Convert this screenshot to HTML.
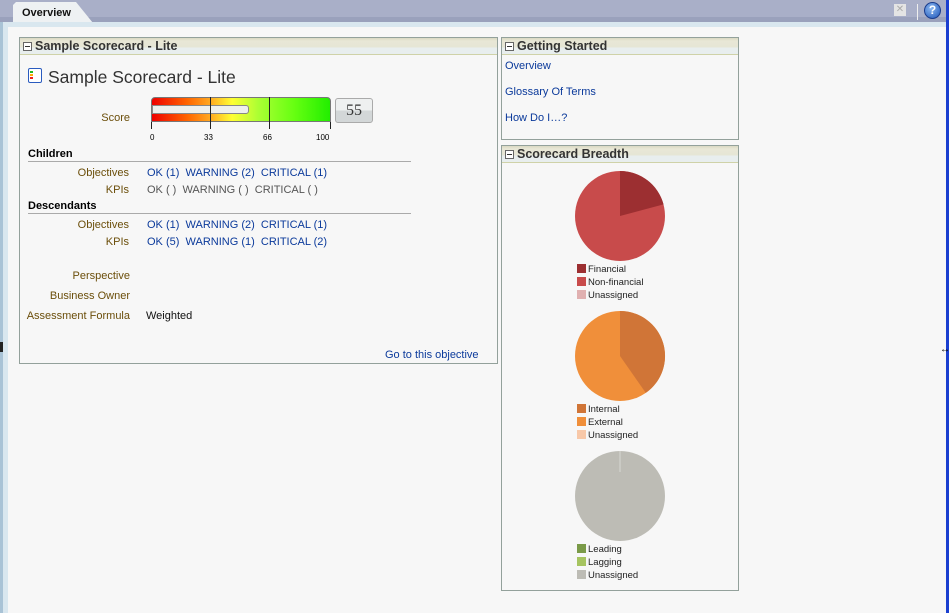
<!DOCTYPE html>
<html><head><meta charset="utf-8"><style>
*{margin:0;padding:0;box-sizing:border-box}
body{width:949px;height:613px;overflow:hidden;background:#f7f7f7;font-family:"Liberation Sans",sans-serif;font-size:11px;position:relative}
.a{position:absolute;white-space:nowrap;line-height:13px;margin-top:1px}
.lb{color:#6b4e0a;text-align:right;width:200px}
.bl{color:#0b3a9b}
.gr{color:#555}
.box{position:absolute;border:1px solid #93a19b;background:#f7f7f7}
.hd{position:absolute;left:0;right:0;top:0;height:17px;background:linear-gradient(#d9d8c3 0,#e8e7d6 3px,#e6e6d5 9px,#e8eeee 10px,#e8eeee 16px);border-bottom:1px solid #cfd2a8;font-weight:bold;font-size:12.5px;color:#333;line-height:16px;padding-left:15px}
.hd:before{content:"";position:absolute;left:3px;top:4px;width:7px;height:7px;border:1px solid #666;background:#fff}
.hd:after{content:"";position:absolute;left:5px;top:8px;width:5px;height:1px;background:#333}
.sq{position:absolute;width:9px;height:9px}
.lg{position:absolute;font-size:9.5px;color:#222;line-height:11px;margin-top:1px}
</style></head><body>
<div style="position:absolute;left:0;top:0;width:949px;height:22px;background:#a9afc8"></div>
<div style="position:absolute;left:0;top:17px;width:949px;height:5px;background:#9aa1bc"></div>
<div style="position:absolute;left:13px;top:2px;width:80px;height:21px;background:#eef1f3;clip-path:polygon(0 3px,3px 0,63px 0,80px 21px,0 21px)"></div>
<div class="a" style="left:22px;top:6px;font-weight:bold;font-size:11px;color:#111">Overview</div>
<div style="position:absolute;left:3px;top:22px;width:944px;height:591px;background:#d9e7ef"></div>
<div style="position:absolute;left:0;top:22px;width:3px;height:591px;background:#a9c3d6"></div>
<div style="position:absolute;left:8px;top:27px;width:939px;height:586px;background:#f7f7f7"></div>
<div style="position:absolute;left:946px;top:0;width:3px;height:613px;background:#1a3fd0"></div>
<div style="position:absolute;left:894px;top:4px;width:12px;height:12px;background:#e4e4e4;color:#aaa;font-size:10px;line-height:12px;text-align:center">✕</div>
<div style="position:absolute;left:917px;top:4px;width:1px;height:16px;background:#eee"></div>
<div style="position:absolute;left:924px;top:2px;width:17px;height:17px;border-radius:50%;background:radial-gradient(circle at 40% 35%,#8cb8f0,#1d55b8);border:1px solid #1a3c8c;color:#fff;font-weight:bold;font-size:12px;line-height:15px;text-align:center">?</div>
<div style="position:absolute;left:0;top:342px;width:3px;height:10px;background:#222"></div>
<div class="a" style="left:940px;top:342px;font-size:10px">↔</div>

<div class="box" style="left:19px;top:37px;width:479px;height:327px"><div class="hd">Sample Scorecard - Lite</div></div>
<div style="position:absolute;left:28px;top:68px;width:14px;height:15px;border:1px solid #2a5bbf;background:#fff;border-radius:2px"></div>
<div style="position:absolute;left:30px;top:71px;width:3px;height:2px;background:#2b2"></div>
<div style="position:absolute;left:30px;top:74px;width:3px;height:2px;background:#fa0"></div>
<div style="position:absolute;left:30px;top:77px;width:3px;height:2px;background:#e22"></div>
<div class="a" style="left:48px;top:66px;font-size:17.5px;line-height:20px;color:#333">Sample Scorecard - Lite</div>

<div class="a lb" style="left:-70px;top:111px">Score</div>
<div style="position:absolute;left:151px;top:97px;width:180px;height:25px;border:1px solid #777;border-radius:4px 4px 0 0;background:linear-gradient(90deg,#e00 0,#f60 20%,#fa2 33%,#ff3 45%,#af3 60%,#6f1 80%,#2e0 100%)"></div>
<div style="position:absolute;left:152px;top:105px;width:97px;height:9px;background:#eef0ee;border:1px solid #888;border-radius:0 3px 3px 0"></div>
<div style="position:absolute;left:210px;top:97px;width:1px;height:32px;background:#222"></div>
<div style="position:absolute;left:269px;top:97px;width:1px;height:32px;background:#222"></div>
<div style="position:absolute;left:151px;top:122px;width:1px;height:7px;background:#222"></div>
<div style="position:absolute;left:330px;top:122px;width:1px;height:7px;background:#222"></div>
<div class="a" style="left:150px;top:132px;font-size:8px;line-height:10px">0</div>
<div class="a" style="left:204px;top:132px;font-size:8px;line-height:10px">33</div>
<div class="a" style="left:263px;top:132px;font-size:8px;line-height:10px">66</div>
<div class="a" style="left:316px;top:132px;font-size:8px;line-height:10px">100</div>
<div style="position:absolute;left:335px;top:98px;width:38px;height:25px;border:1px solid #aaa;border-radius:3px;background:linear-gradient(#eef0f0 50%,#d3d7d8 50%);font-family:'Liberation Serif',serif;font-size:16px;text-align:center;line-height:24px;color:#333">55</div>

<div class="a" style="left:28px;top:147px;font-weight:bold;font-size:11px">Children</div>
<div style="position:absolute;left:28px;top:161px;width:383px;height:1px;background:#aaa"></div>
<div class="a lb" style="left:-71px;top:166px">Objectives</div>
<div class="a bl" style="left:147px;top:166px">OK (1)&nbsp; WARNING (2)&nbsp; CRITICAL (1)</div>
<div class="a lb" style="left:-71px;top:183px">KPIs</div>
<div class="a gr" style="left:147px;top:183px">OK ( )&nbsp; WARNING ( )&nbsp; CRITICAL ( )</div>
<div class="a" style="left:28px;top:199px;font-weight:bold;font-size:11px">Descendants</div>
<div style="position:absolute;left:28px;top:213px;width:383px;height:1px;background:#aaa"></div>
<div class="a lb" style="left:-71px;top:218px">Objectives</div>
<div class="a bl" style="left:147px;top:218px">OK (1)&nbsp; WARNING (2)&nbsp; CRITICAL (1)</div>
<div class="a lb" style="left:-71px;top:235px">KPIs</div>
<div class="a bl" style="left:147px;top:235px">OK (5)&nbsp; WARNING (1)&nbsp; CRITICAL (2)</div>
<div class="a lb" style="left:-70px;top:269px">Perspective</div>
<div class="a lb" style="left:-70px;top:289px">Business Owner</div>
<div class="a lb" style="left:-70px;top:309px">Assessment Formula</div>
<div class="a" style="left:146px;top:309px;color:#111">Weighted</div>
<div class="a bl" style="left:385px;top:348px">Go to this objective</div>

<div class="box" style="left:501px;top:37px;width:238px;height:103px"><div class="hd">Getting Started</div></div>
<div class="a bl" style="left:505px;top:59px">Overview</div>
<div class="a bl" style="left:505px;top:85px">Glossary Of Terms</div>
<div class="a bl" style="left:505px;top:111px">How Do I…?</div>

<div class="box" style="left:501px;top:145px;width:238px;height:446px"><div class="hd">Scorecard Breadth</div></div>
<svg style="position:absolute;left:0;top:0" width="949" height="613">
<circle cx="620" cy="216" r="45" fill="#c84b4b"/>
<path d="M620 216 L620 171 A45 45 0 0 1 663.5 204.4 Z" fill="#9c2f31"/>
<circle cx="620" cy="356" r="45" fill="#f08f3a"/>
<path d="M620 356 L620 311 A45 45 0 0 1 645.8 392.9 Z" fill="#d07537"/>
<circle cx="620" cy="496" r="45" fill="#bdbcb5"/>
<line x1="620" y1="451" x2="620" y2="472" stroke="#d8d8d2" stroke-width="1"/>
</svg>
<div class="sq" style="left:577px;top:264px;background:#9c2f31"></div><div class="lg" style="left:588px;top:263px">Financial</div>
<div class="sq" style="left:577px;top:277px;background:#c84b4b"></div><div class="lg" style="left:588px;top:276px">Non-financial</div>
<div class="sq" style="left:577px;top:290px;background:#e0b0b0"></div><div class="lg" style="left:588px;top:289px">Unassigned</div>
<div class="sq" style="left:577px;top:404px;background:#d07537"></div><div class="lg" style="left:588px;top:403px">Internal</div>
<div class="sq" style="left:577px;top:417px;background:#f08f3a"></div><div class="lg" style="left:588px;top:416px">External</div>
<div class="sq" style="left:577px;top:430px;background:#f8c8a8"></div><div class="lg" style="left:588px;top:429px">Unassigned</div>
<div class="sq" style="left:577px;top:544px;background:#7a9a48"></div><div class="lg" style="left:588px;top:543px">Leading</div>
<div class="sq" style="left:577px;top:557px;background:#a6c460"></div><div class="lg" style="left:588px;top:556px">Lagging</div>
<div class="sq" style="left:577px;top:570px;background:#bdbcb5"></div><div class="lg" style="left:588px;top:569px">Unassigned</div>
</body></html>
